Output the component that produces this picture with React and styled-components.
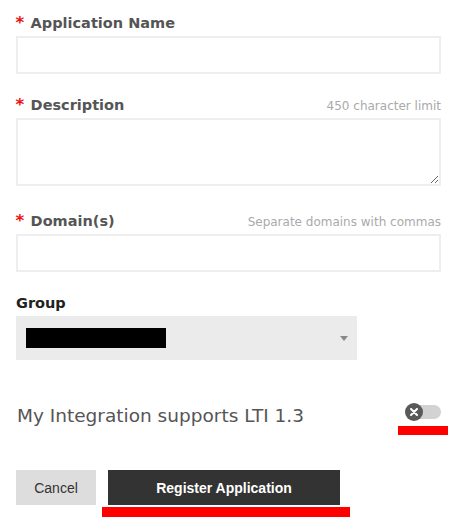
import React from "react";
import styled, { createGlobalStyle } from "styled-components";

const GlobalStyle = createGlobalStyle`
  body {
    margin: 0;
    background: #ffffff;
    font-family: "DejaVu Sans", Verdana, sans-serif;
  }
`;

const Form = styled.form`
  width: 460px;
  box-sizing: border-box;
  padding: 16px 19px 4px 16px;
`;

const Field = styled.div`
  margin-bottom: ${(p) => p.gap || 24}px;
`;

const LabelRow = styled.div`
  display: flex;
  justify-content: space-between;
  align-items: baseline;
  height: 15px;
  line-height: 15px;
  margin-bottom: 5px;
`;

const Label = styled.label`
  font-size: 14.5px;
  font-weight: bold;
  color: ${(p) => (p.dark ? "#222" : "#555")};
`;

const Star = styled.span`
  display: inline-block;
  color: #ee1111;
  margin-right: 7px;
  transform: scale(1.15);
  transform-origin: 50% 80%;
`;

const Hint = styled.span`
  font-size: 12px;
  color: #aaaaaa;
`;

const Input = styled.input`
  display: block;
  width: 100%;
  height: 38px;
  box-sizing: border-box;
  border: 2px solid #eeeeee;
  background: #fff;
  outline: none;
`;

const TextArea = styled.textarea`
  display: block;
  width: 100%;
  height: 68px;
  box-sizing: border-box;
  border: 2px solid #eeeeee;
  resize: vertical;
  outline: none;
`;

const Select = styled.div`
  display: flex;
  align-items: center;
  justify-content: space-between;
  width: 341px;
  height: 44px;
  box-sizing: border-box;
  padding: 0 9px 0 10px;
  background: #ebebeb;
`;

const Redacted = styled.div`
  width: 140px;
  height: 20px;
  background: #000;
`;

const Caret = styled.div`
  width: 0;
  height: 0;
  border-left: 4px solid transparent;
  border-right: 4px solid transparent;
  border-top: 5px solid #888;
`;

const ToggleRow = styled.div`
  display: flex;
  align-items: flex-start;
  justify-content: space-between;
  margin-top: 46px;
  padding-left: 1px;
`;

const ToggleText = styled.span`
  font-size: 18.5px;
  line-height: 20px;
  color: #555;
`;

const ToggleWrap = styled.div`
  position: relative;
  width: 36px;
  height: 18px;
  margin-top: -3px;
`;

const Track = styled.div`
  position: absolute;
  left: 4px;
  right: 0;
  top: 2px;
  height: 14px;
  border-radius: 7px;
  background: #d2d2d2;
`;

const Knob = styled.div`
  position: absolute;
  left: 0;
  top: 0;
  width: 18px;
  height: 18px;
  border-radius: 50%;
  background: #595959;
  display: flex;
  align-items: center;
  justify-content: center;
`;

const Highlight = styled.div`
  position: absolute;
  background: #ff0000;
  left: -7px;
  right: -7px;
  top: 23px;
  height: 9px;
`;

const Actions = styled.div`
  display: flex;
  align-items: flex-start;
  gap: 12px;
  margin-top: 44px;
`;

const ButtonStack = styled.div`
  display: flex;
  flex-direction: column;
`;

const UnderBar = styled.div`
  height: 10px;
  margin: 2px -10px 0 -6px;
  background: #ff0000;
`;

const Button = styled.button`
  height: 35px;
  border: none;
  border-radius: 0;
  font-family: "Liberation Sans", Arial, sans-serif;
  font-size: 14px;
  font-weight: ${(p) => (p.primary ? "bold" : "normal")};
  color: ${(p) => (p.primary ? "#fff" : "#333")};
  background: ${(p) => (p.primary ? "#333333" : "#dddddd")};
  width: ${(p) => p.w}px;
  padding: 0;
`;

export default function App() {
  return (
    <>
      <GlobalStyle />
      <Form>
        <Field gap={24}>
          <LabelRow>
            <Label>
              <Star>*</Star>Application Name
            </Label>
          </LabelRow>
          <Input />
        </Field>
        <Field gap={28}>
          <LabelRow>
            <Label>
              <Star>*</Star>Description
            </Label>
            <Hint>450 character limit</Hint>
          </LabelRow>
          <TextArea />
        </Field>
        <Field gap={24}>
          <LabelRow>
            <Label>
              <Star>*</Star>Domain(s)
            </Label>
            <Hint>Separate domains with commas</Hint>
          </LabelRow>
          <Input />
        </Field>
        <Field gap={0}>
          <LabelRow>
            <Label dark>Group</Label>
          </LabelRow>
          <Select>
            <Redacted />
            <Caret />
          </Select>
        </Field>
        <ToggleRow>
          <ToggleText>My Integration supports LTI 1.3</ToggleText>
          <ToggleWrap>
            <Track />
            <Knob>
              <svg width="8" height="8" viewBox="0 0 8 8">
                <path d="M1 1L7 7M7 1L1 7" stroke="#fff" strokeWidth="2" strokeLinecap="round" />
              </svg>
            </Knob>
            <Highlight />
          </ToggleWrap>
        </ToggleRow>
        <Actions>
          <Button type="button" w={80}>
            Cancel
          </Button>
          <ButtonStack>
            <Button type="button" primary w={232}>
              Register Application
            </Button>
            <UnderBar />
          </ButtonStack>
        </Actions>
      </Form>
    </>
  );
}
